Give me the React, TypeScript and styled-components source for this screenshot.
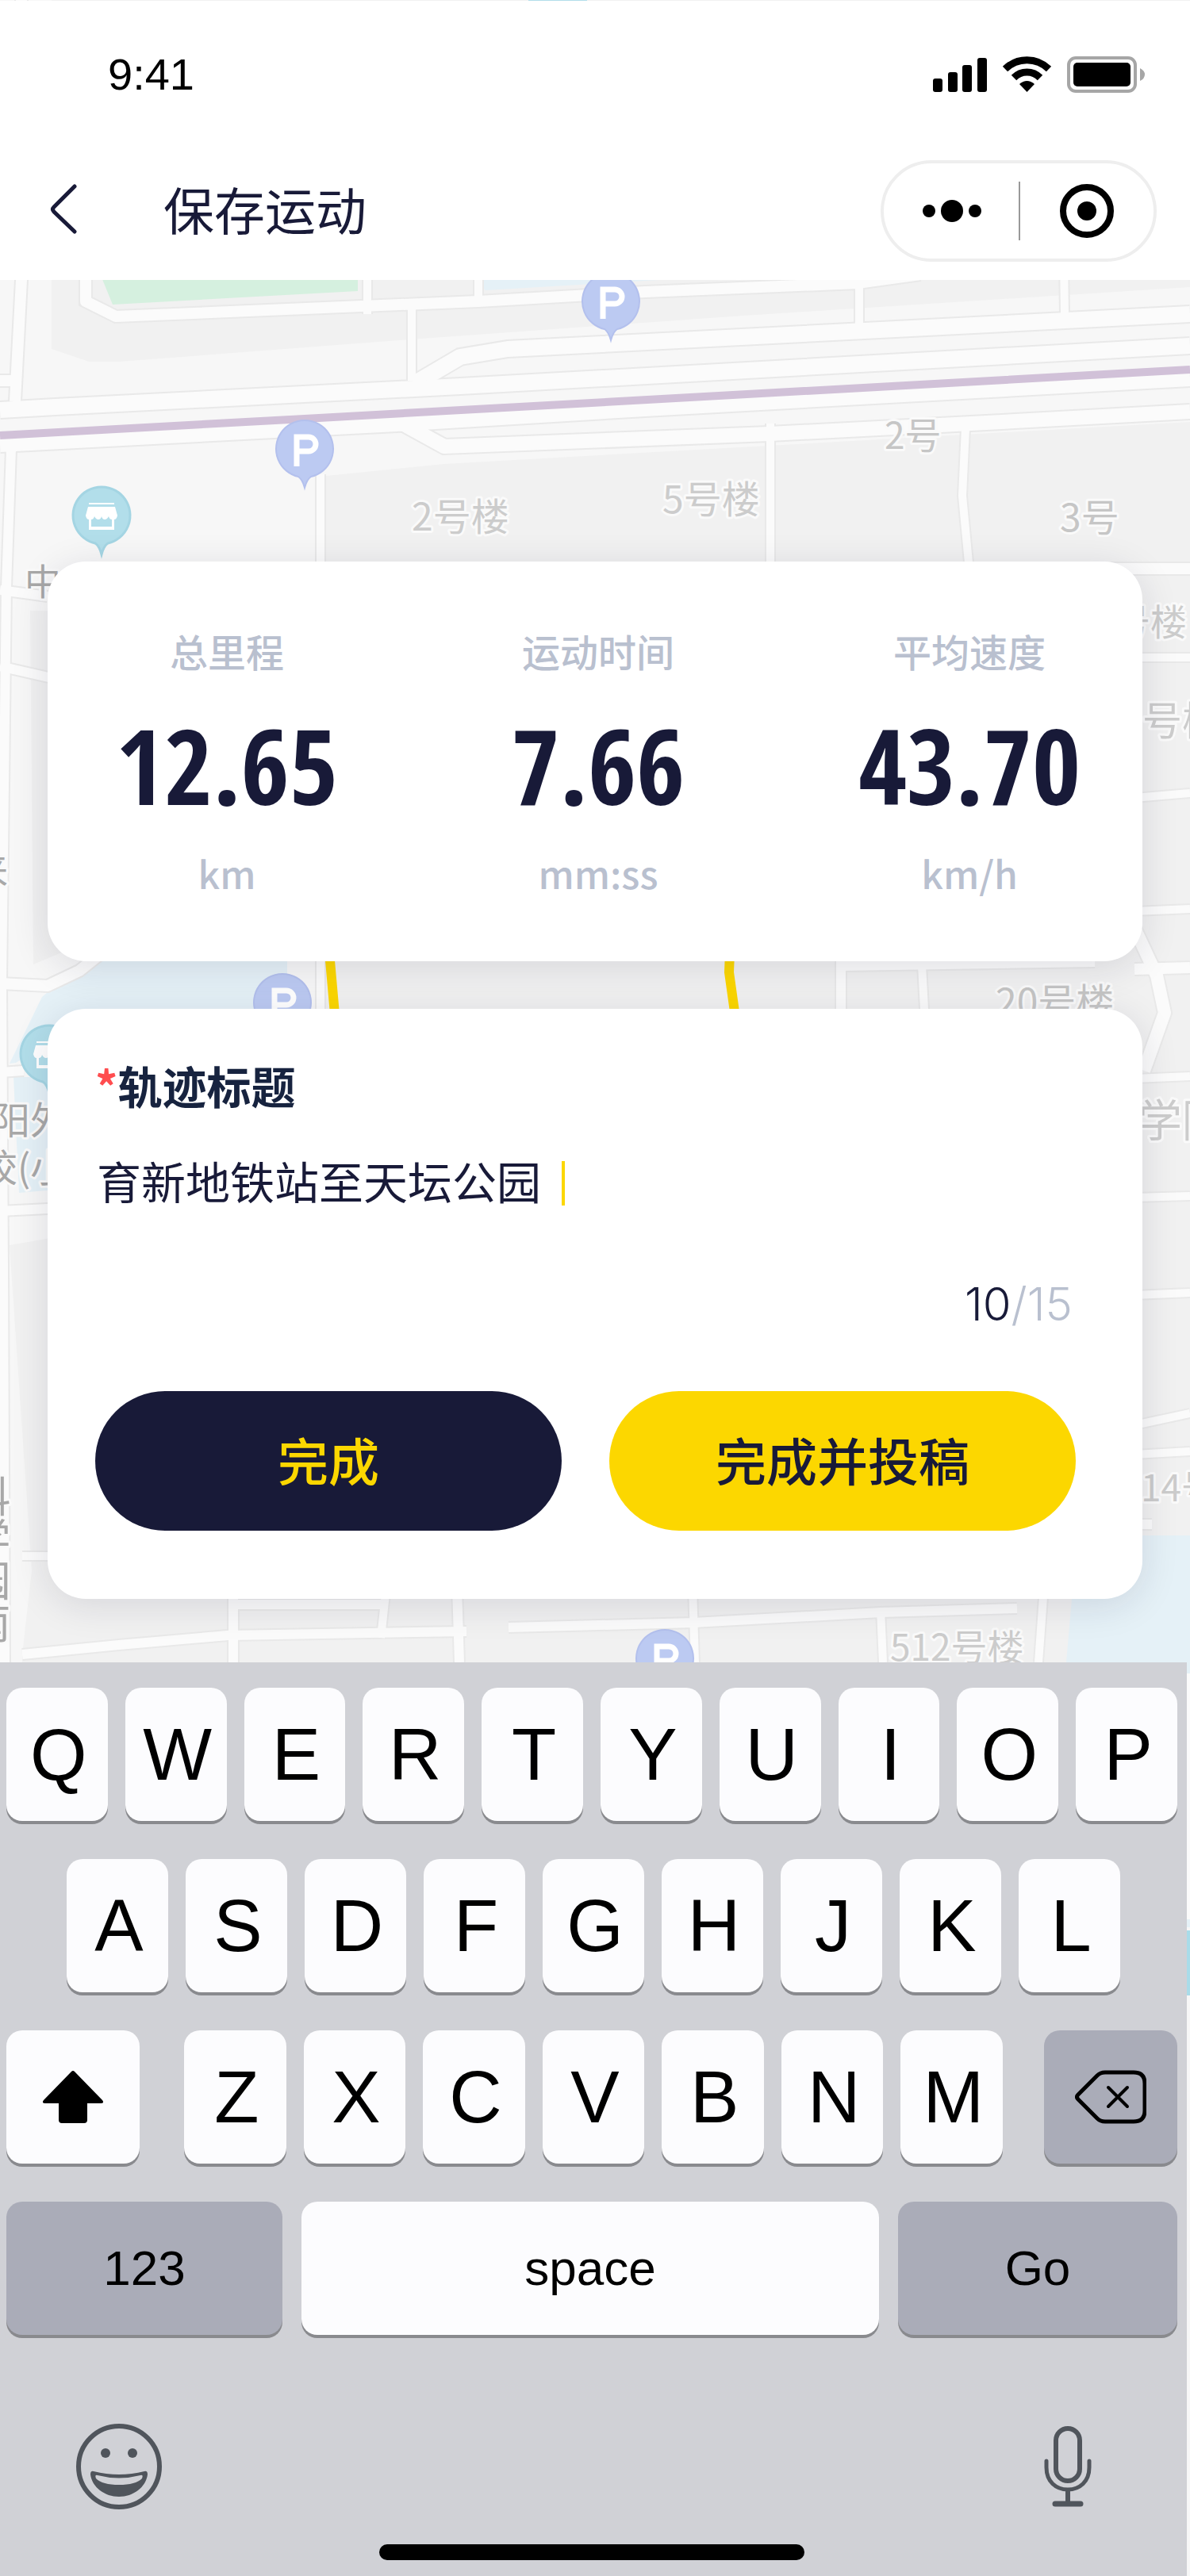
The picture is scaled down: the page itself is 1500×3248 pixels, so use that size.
import React, { useState } from "react";
import styled, { createGlobalStyle } from "styled-components";

const cjk = '"Noto Sans CJK SC", sans-serif';
const latin = '"Liberation Sans", Arial, sans-serif';
const navy = "#181a38";
const yellow = "#fcd700";
const muted = "#b9c0cf";

const GlobalStyle = createGlobalStyle`
  *, *::before, *::after { box-sizing: border-box; }
  body { margin: 0; background: #f7f7f7; }
  button { margin: 0; padding: 0; border: 0; background: none; color: inherit; cursor: pointer; }
  svg { display: block; }
`;

/* ---------- Map ---------- */

type Road = [points: string, width: number];

const roads: Road[] = [
  ["27,0 27,353 19,506", 14],
  ["0,480 22,480", 14],
  ["108,340 108,380 146,399 603,380 813,368 1081,357 1160,346", 14],
  ["463,330 463,396", 10],
  ["603,330 603,386", 10],
  ["519,386 519,480", 10],
  ["1083,356 1083,412", 10],
  ["1341,330 1342,396", 10],
  ["522,484 580,450 640,440 1500,396", 20],
  ["0,517 70,513 580,487 1500,436", 20],
  ["0,560 500,534 813,515 1500,477", 20],
  ["500,530 560,563 970,547 1224,534 1500,519", 18],
  ["404,598 404,1300", 10],
  ["971,534 971,720", 10],
  ["1217,540 1213,625 1222,720", 10],
  ["14,566 8,740 2,1240 4,1600 6,2096", 12],
  ["0,744 60,752", 12],
  ["0,840 70,856", 12],
  ["1400,717 1500,717", 14],
  ["1430,829 1500,829", 10],
  ["1430,1006 1500,1000", 10],
  ["1430,1149 1500,1146", 10],
  ["1430,1222 1500,1220", 14],
  ["1430,1360 1500,1357", 10],
  ["1430,1510 1500,1508", 10],
  ["1430,1633 1500,1630", 10],
  ["1430,1797 1500,1782", 10],
  ["1430,1834 1500,1830", 10],
  ["1430,1922 1452,1922", 12],
  ["0,1240 60,1243 100,1224 130,1200", 14],
  ["0,1352 30,1350", 12],
  ["0,1527 80,1523", 12],
  ["1060,1206 1060,1290", 12],
  ["1060,1217 1380,1212", 14],
  ["1162,1217 1166,1290", 10],
  ["1430,1170 1458,1230 1468,1277 1442,1350", 16],
  ["28,1962 80,1962", 10],
  ["294,2000 294,2096", 12],
  ["294,2023 483,2023", 12],
  ["486,2010 480,2065", 10],
  ["576,2000 579,2096", 12],
  ["28,2086 150,2074 287,2062 588,2057", 12],
  ["641,2052 874,2046 1110,2033 1282,2028", 12],
  ["873,2000 876,2096", 10],
  ["1110,2030 1113,2096", 10],
  ["1316,2000 1309,2096", 10],
  ["1498,2110 1498,2420", 8],
];

const labels: [text: string, x: number, y: number, size: number, color: string][] = [
  ["2号", 1115, 566, 46, "#c6c6c6"],
  ["5号楼", 835, 647, 48, "#cccccc"],
  ["2号楼", 519, 669, 48, "#cccccc"],
  ["3号", 1336, 670, 48, "#c6c6c6"],
  ["中", 31, 750, 46, "#a8a8a8"],
  ["号楼", 1404, 801, 46, "#cccccc"],
  ["号楼", 1440, 927, 50, "#cccccc"],
  ["来", -36, 1114, 46, "#a8a8a8"],
  ["20号楼", 1255, 1281, 48, "#c6c6c6"],
  ["阳外", -10, 1430, 48, "#a8a8a8"],
  ["校(小", -26, 1490, 48, "#a8a8a8"],
  ["学院", 1434, 1433, 56, "#cccccc"],
  ["14号", 1438, 1893, 46, "#cccccc"],
  ["512号楼", 1122, 2094, 46, "#cccccc"],
];

const MapSvg = styled.svg`
  position: absolute;
  inset: 0;
  width: 100%;
  height: 100%;
  z-index: -1;
`;

const MapLabel = styled.text<{ $vertical?: boolean }>`
  font-family: ${cjk};
  writing-mode: ${(p) => (p.$vertical ? "vertical-rl" : "horizontal-tb")};
  paint-order: stroke;
  stroke: #fafafa;
  stroke-width: 6px;
  stroke-linejoin: round;
`;

const pinPath = "M-8 34 A36 36 0 1 1 8 34 Q3 37 0 48 Q-3 37 -8 34Z";

function ParkingPin({ x, y }: { x: number; y: number }) {
  return (
    <g transform={`translate(${x} ${y})`}>
      <path d={pinPath} fill="#bccaf2" stroke="#b3c0ed" strokeWidth="2" />
      <path d="M-10 21 V-16 H5 a9 9 0 0 1 0 18 H-10" fill="none" stroke="#fff" strokeWidth="7" />
    </g>
  );
}

function ShopPin({ x, y }: { x: number; y: number }) {
  return (
    <g transform={`translate(${x} ${y})`}>
      <path d={pinPath} fill="#b2deea" stroke="#a4d5e3" strokeWidth="3" />
      <path d="M-16 -17 H16 V-15 H-16Z" fill="#fff" />
      <path
        d="M-17 -12 H17 L20 -1 Q19 4 16 4 V17 H-16 V4 Q-19 4 -20 -1Z M-13 4 V13 H13 V4 Q10 4 9 0 Q7 4 4 4 Q1 4 0 0 Q-1 4 -4 4 Q-7 4 -9 0 Q-10 4 -13 4Z"
        fill="#fff"
        fillRule="evenodd"
      />
    </g>
  );
}

function StreetMap() {
  return (
    <MapSvg viewBox="0 0 1500 3248" preserveAspectRatio="xMidYMin slice" aria-hidden="true">
      <rect width="1500" height="3248" fill="#f7f7f7" />
      <g fill="#f1f1f1">
        <path d="M65 0 V440 L112 456 H150 L517 428 L937 398 L1500 362 V0Z" />
        <path d="M411 600 L560 585 L1500 532 V2096 H28 V2086 L40 1980 L12 1570 L70 1560 H411Z" />
        <path d="M38 770 H80 V1200 L42 1216Z" />
      </g>
      <path d="M124 340 L142 384 L451 367 V340Z" fill="#d5f0df" />
      <path d="M595 340 L597 353 L612 366 L830 353 V340Z" fill="#e5f1f7" />
      <path d="M666 0 H740 V4 H666Z" fill="#b2deea" />
      <g fill="#e5f1f7">
        <path d="M120 1200 H362 V1290 H100 L20 1340 L12 1341 L53 1257Z" />
        <path d="M17 1358 H70 V1500 L24 1504Z" />
        <path d="M1380 1936 H1500 V2430 H1340 L1344 2096 L1351 2016Z" />
      </g>
      <g fill="none" stroke="#e9e9e9">
        {roads.map(([points, width]) => (
          <polyline key={points} points={points} strokeWidth={width + 4} />
        ))}
      </g>
      <g fill="none" stroke="#fbfbfb" strokeLinejoin="round">
        {roads.map(([points, width]) => (
          <polyline key={points} points={points} strokeWidth={width} />
        ))}
      </g>
      <path d="M1496 2434 H1500 V2516 H1496Z" fill="#a9dce9" />
      <path d="M0 549 L384 528 L1500 466" fill="none" stroke="#d1c1d8" strokeWidth="10" />
      <path
        d="M415 1200 L423 1290 M920 1200 L919 1226 L928 1290"
        fill="none"
        stroke={yellow}
        strokeWidth="12"
      />
      {labels.map(([text, x, y, size, color]) => (
        <MapLabel key={`${text}${y}`} x={x} y={y} fontSize={size} fill={color}>
          {text}
        </MapLabel>
      ))}
      <MapLabel $vertical x={-13} y={1860} fontSize={53} fill="#a8a8a8">
        科学园南
      </MapLabel>
      <ParkingPin x={770} y={381} />
      <ParkingPin x={384} y={567} />
      <ParkingPin x={356} y={1265} />
      <ParkingPin x={838} y={2092} />
      <ShopPin x={128} y={651} />
      <ShopPin x={62} y={1330} />
    </MapSvg>
  );
}

/* ---------- Page ---------- */

const Page = styled.div`
  position: relative;
  z-index: 0;
  overflow: hidden;
  padding-top: 1px;
  font-family: ${cjk};
  color: ${navy};
`;

const Header = styled.header`
  background: #fff;
  padding-bottom: 8px;
`;

const StatusBar = styled.div`
  display: flex;
  align-items: center;
  justify-content: space-between;
  height: 186px;
  padding: 0 56px 0 136px;
  color: #000;
`;

const Clock = styled.time`
  font: 400 56px/64px ${latin};
`;

const NavBar = styled.nav`
  display: flex;
  align-items: center;
  height: 158px;
  padding: 0 42px 0 62px;
`;

const BackButton = styled.button`
  margin-right: 108px;
`;

const Title = styled.h1`
  flex: 1;
  margin: 0;
  padding-bottom: 8px;
  font-size: 64px;
  font-weight: 400;
  line-height: 80px;
`;

const Capsule = styled.div`
  display: flex;
  align-items: center;
  width: 348px;
  height: 128px;
  padding-left: 2px;
  border: 4px solid #eee;
  border-radius: 64px;
  color: #000;
`;

const CapsuleButton = styled.button`
  flex: 1;
  display: flex;
  align-items: center;
  justify-content: center;
  height: 100%;
`;

const CapsuleDivider = styled.span`
  width: 2px;
  height: 74px;
  background: #999;
`;

const Cards = styled.main`
  display: flex;
  flex-direction: column;
  gap: 60px;
  padding: 355px 60px 80px;
`;

const Card = styled.section`
  border-radius: 48px;
  background: #fff;
  box-shadow: 0 8px 48px rgba(24, 26, 56, 0.12);
`;

const StatsCard = styled(Card)`
  display: flex;
  justify-content: space-between;
  padding: 80px 88px 80px 96px;
`;

const Stat = styled.div`
  display: flex;
  flex-direction: column;
  align-items: center;
  width: 260px;
  white-space: nowrap;
`;

const StatText = styled.span`
  color: ${muted};
  font-size: 48px;
  font-weight: 500;
  line-height: 64px;
`;

const StatValue = styled.strong`
  margin: 44px 0 36px;
  font: 700 132px/136px "Open Sans Condensed", "Roboto Condensed", sans-serif;
`;

const FormCard = styled(Card)`
  display: flex;
  flex-direction: column;
  padding: 60px 84px 86px 60px;
`;

const FieldLabel = styled.label`
  color: #17233f;
  font-size: 56px;
  font-weight: 700;
  line-height: 72px;
`;

const Required = styled.span`
  color: #ff4d4f;
`;

const FieldRow = styled.div`
  display: flex;
  align-items: flex-end;
  gap: 26px;
  margin-top: 48px;
  padding-left: 2px;
`;

const TitleInput = styled.input`
  field-sizing: content;
  max-width: 100%;
  height: 72px;
  padding: 0;
  border: 0;
  outline: 0;
  background: transparent;
  color: ${navy};
  caret-color: ${yellow};
  font: 400 56px/72px ${cjk};
`;

const Caret = styled.span`
  width: 4px;
  height: 56px;
  margin-bottom: 4px;
  background: ${yellow};
`;

const Counter = styled.output`
  align-self: flex-end;
  margin: 84px 4px 74px 0;
  color: ${muted};
  font: 300 58px/72px Inter, sans-serif;
`;

const CounterValue = styled.span`
  color: ${navy};
`;

const Actions = styled.div`
  display: flex;
  gap: 60px;
`;

const ActionButton = styled.button<{ $primary?: boolean }>`
  flex: 1;
  height: 176px;
  padding-bottom: 6px;
  border-radius: 88px;
  background: ${(p) => (p.$primary ? yellow : navy)};
  color: ${(p) => (p.$primary ? navy : yellow)};
  font: 500 64px/80px ${cjk};
`;

/* ---------- Keyboard ---------- */

const Keyboard = styled.section`
  margin-right: 4px;
  padding: 32px 12px 20px 8px;
  background: #d0d1d6;
  color: #000;
`;

const KeyRows = styled.div`
  display: flex;
  flex-direction: column;
  gap: 48px;
`;

const KeyRow = styled.div<{ $inset?: boolean; $gap?: number }>`
  display: flex;
  gap: ${(p) => p.$gap ?? 22}px;
  padding: ${(p) => (p.$inset ? "0 72px 0 76px" : 0)};
`;

const KeyGroup = styled.div`
  flex: 1;
  display: flex;
  gap: 22px;
  padding-left: 4px;
`;

const Key = styled.button<{ $grow?: number; $width?: number; $dark?: boolean; $word?: boolean }>`
  flex: ${(p) => (p.$width ? `0 0 ${p.$width}px` : `${p.$grow ?? 1} 1 0`)};
  display: flex;
  align-items: center;
  justify-content: center;
  min-width: 0;
  height: 168px;
  padding-left: ${(p) => (p.$word || p.$width ? 0 : 4)}px;
  border-radius: 20px;
  background: ${(p) => (p.$dark ? "#aaacb8" : "#fcfcfe")};
  box-shadow: 0 4px 0 #898a8e;
  font: 400 ${(p) => (p.$word ? 62 : 92)}px/104px ${latin};
`;

const KeyboardTools = styled.div`
  display: flex;
  align-items: center;
  justify-content: space-between;
  margin: 112px 108px 44px 88px;
  color: #50555c;
`;

const HomeIndicator = styled.div`
  width: 536px;
  height: 20px;
  margin: 0 auto;
  border-radius: 10px;
  background: #000;
`;

const stats = [
  { label: "总里程", value: "12.65", unit: "km" },
  { label: "运动时间", value: "7.66", unit: "mm:ss" },
  { label: "平均速度", value: "43.70", unit: "km/h" },
];

const letters = (row: string) => row.split("").map((letter) => <Key key={letter}>{letter}</Key>);

const maxLength = 15;

export default function App() {
  const [title, setTitle] = useState("育新地铁站至天坛公园");

  return (
    <Page>
      <GlobalStyle />
      <StreetMap />

      <Header>
        <StatusBar>
          <Clock>9:41</Clock>
          <svg width="268" height="48" viewBox="0 0 268 48" aria-hidden="true">
            <rect x="0" y="29" width="12" height="17" rx="3" />
            <rect x="19" y="21" width="12" height="25" rx="3" />
            <rect x="37" y="12" width="12" height="34" rx="3" />
            <rect x="56" y="3" width="12" height="43" rx="3" />
            <g fill="none" stroke="#000" strokeWidth="9">
              <path d="M91 17 A39 39 0 0 1 146 17" />
              <path d="M102 28 A23 23 0 0 1 135 28" />
            </g>
            <path d="M118.500 46 L109 36 Q118.500 28 128 36Z" />
            <rect x="171" y="3" width="84" height="42" rx="9" fill="none" stroke="#a6a6a6" strokeWidth="4" />
            <rect x="177" y="9" width="72" height="30" rx="5" />
            <path d="M261 16 Q267 19 267 24 Q267 29 261 32Z" fill="#a6a6a6" />
          </svg>
        </StatusBar>
        <NavBar>
          <BackButton aria-label="返回">
            <svg width="36" height="68" viewBox="0 0 36 68" fill="none" stroke={navy} strokeWidth="5" strokeLinecap="round" strokeLinejoin="round">
              <path d="M32 3 L6 29 Q3 32 6 35 L32 60" />
            </svg>
          </BackButton>
          <Title>保存运动</Title>
          <Capsule>
            <CapsuleButton aria-label="更多">
              <svg width="76" height="28" viewBox="0 0 76 28">
                <circle cx="9" cy="14" r="8" />
                <circle cx="38" cy="14" r="14" />
                <circle cx="67" cy="14" r="8" />
              </svg>
            </CapsuleButton>
            <CapsuleDivider />
            <CapsuleButton aria-label="关闭">
              <svg width="68" height="68" viewBox="0 0 68 68">
                <circle cx="34" cy="34" r="30" fill="none" stroke="#000" strokeWidth="8" />
                <circle cx="34" cy="34" r="12" />
              </svg>
            </CapsuleButton>
          </Capsule>
        </NavBar>
      </Header>

      <Cards>
        <StatsCard>
          {stats.map((stat) => (
            <Stat key={stat.label}>
              <StatText>{stat.label}</StatText>
              <StatValue>{stat.value}</StatValue>
              <StatText>{stat.unit}</StatText>
            </Stat>
          ))}
        </StatsCard>

        <FormCard>
          <FieldLabel htmlFor="track-title">
            <Required>*</Required>轨迹标题
          </FieldLabel>
          <FieldRow>
            <TitleInput
              id="track-title"
              value={title}
              maxLength={maxLength}
              onChange={(event) => setTitle(event.target.value)}
            />
            <Caret />
          </FieldRow>
          <Counter htmlFor="track-title">
            <CounterValue>{title.length}</CounterValue>/{maxLength}
          </Counter>
          <Actions>
            <ActionButton>完成</ActionButton>
            <ActionButton $primary>完成并投稿</ActionButton>
          </Actions>
        </FormCard>
      </Cards>

      <Keyboard>
        <KeyRows>
          <KeyRow>{letters("QWERTYUIOP")}</KeyRow>
          <KeyRow $inset>{letters("ASDFGHJKL")}</KeyRow>
          <KeyRow $gap={52}>
            <Key $width={168} aria-label="shift">
              <svg width="76" height="66" viewBox="0 0 76 66">
                <path d="M36 1 Q38 -1 40 1 L75 37 Q78 41 73 41 H56 V62 Q56 66 52 66 H24 Q20 66 20 62 V41 H3 Q-2 41 1 37Z" />
              </svg>
            </Key>
            <KeyGroup>{letters("ZXCVBNM")}</KeyGroup>
            <Key $width={168} $dark aria-label="delete">
              <svg width="90" height="68" viewBox="0 0 90 68" fill="none" stroke="#000" strokeWidth="5" strokeLinecap="round" strokeLinejoin="round">
                <path d="M38 3 H74 Q88 3 88 17 V51 Q88 65 74 65 H38 Q32 65 28 61 L4 37 Q1 34 4 31 L28 7 Q32 3 38 3Z" />
                <path d="M42 22 L66 46 M66 22 L42 46" strokeWidth="4" />
              </svg>
            </Key>
          </KeyRow>
          <KeyRow $gap={24}>
            <Key $word $dark $grow={348}>123</Key>
            <Key $word $grow={728}>space</Key>
            <Key $word $dark $grow={352}>Go</Key>
          </KeyRow>
        </KeyRows>
        <KeyboardTools>
          <button aria-label="emoji">
            <svg width="108" height="108" viewBox="0 0 108 108" fill="currentColor">
              <circle cx="54" cy="54" r="51" fill="none" stroke="currentColor" strokeWidth="6" />
              <circle cx="37" cy="37" r="6" />
              <circle cx="71" cy="37" r="6" />
              <path
                fillRule="evenodd"
                d="M22 60 Q54 68 86 60 Q90 59 90 64 C88 80 72 92 54 92 C36 92 20 80 18 64 Q18 59 22 60Z M27 65 Q23 64 25 69 Q33 77 54 77 Q75 77 83 69 Q85 64 81 65 Q54 72 27 65Z"
              />
            </svg>
          </button>
          <button aria-label="dictation">
            <svg width="60" height="102" viewBox="0 0 60 102" fill="none" stroke="currentColor" strokeWidth="6">
              <rect x="15" y="3" width="30" height="66" rx="15" />
              <path d="M3 44 V52 C3 70 15 80 30 80 C45 80 57 70 57 52 V44" strokeWidth="5" strokeLinecap="round" />
              <path d="M30 80 V96" />
              <path d="M14 98 H46" strokeWidth="7" strokeLinecap="round" />
            </svg>
          </button>
        </KeyboardTools>
        <HomeIndicator />
      </Keyboard>
    </Page>
  );
}
